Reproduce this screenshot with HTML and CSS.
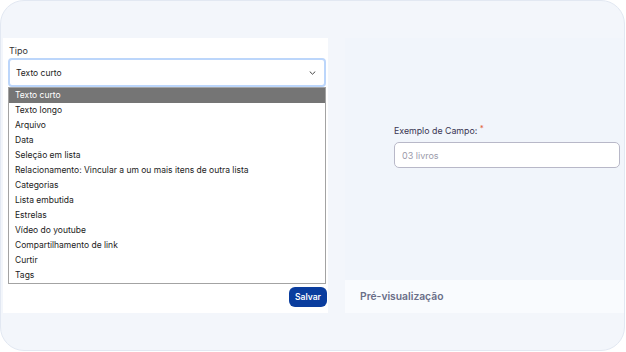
FILE: index.html
```html
<!DOCTYPE html>
<html lang="pt-BR">
<head>
    <meta charset="UTF-8">
    <meta name="viewport" content="width=device-width, initial-scale=1.0">
    <title>Campo - Tipo</title>
    <link rel="stylesheet" href="styles.css">
</head>
<body>
    <div class="card">
        <!-- Formulário -->
        <div class="form-panel">
            <label class="form-label">Tipo</label>
            <div class="select-wrap">
                <div class="select-box">
                    <span>Texto curto</span>
                    <svg class="chevron" width="7" height="4" viewBox="0 0 7 4">
                        <path d="M1 0.8l2.5 2.4 2.5-2.4" fill="none" stroke="#444" stroke-width="1" stroke-linecap="round" stroke-linejoin="round"/>
                    </svg>
                </div>
                <ul class="select-list">
                    <li class="selected">Texto curto</li>
                    <li>Texto longo</li>
                    <li>Arquivo</li>
                    <li>Data</li>
                    <li>Seleção em lista</li>
                    <li>Relacionamento: Vincular a um ou mais itens de outra lista</li>
                    <li>Categorias</li>
                    <li>Lista embutida</li>
                    <li>Estrelas</li>
                    <li>Vídeo do youtube</li>
                    <li>Compartilhamento de link</li>
                    <li>Curtir</li>
                    <li>Tags</li>
                </ul>
            </div>
            <div class="form-actions">
                <button class="btn-save">Salvar</button>
            </div>
        </div>

        <!-- Pré-visualização -->
        <div class="preview-panel">
            <div class="preview-body">
                <div class="field">
                    <label class="field-label">Exemplo de Campo: <span class="required">*</span></label>
                    <input class="field-input" type="text" placeholder="03 livros">
                </div>
            </div>
            <div class="preview-footer">Pré-visualização</div>
        </div>
    </div>
</body>
</html>
```

FILE: styles.css
```css
body {
    margin: 0;
    padding: 0;
    background-color: #ffffff;
    font-family: Inter, "Noto Sans", sans-serif;
}

.card {
    box-sizing: border-box;
    width: 625px;
    height: 351px;
    background-color: #f3f6fb;
    border: 1px solid #e2e8f2;
    border-radius: 24px;
    overflow: hidden;
    display: flex;
    align-items: flex-start;
    gap: 17px;
    padding: 37px 0 0 2px;
}

.form-panel {
    box-sizing: border-box;
    width: 326px;
    height: 275px;
    background-color: #ffffff;
    display: flex;
    flex-direction: column;
    padding: 6px 1px 6px 5px;
}

.form-label {
    font-size: 9px;
    line-height: 14px;
    color: #333333;
    margin-left: 1px;
}

.select-wrap {
    position: relative;
    width: 318px;
}

.select-box {
    box-sizing: border-box;
    height: 29px;
    border: 2px solid #bcd6fb;
    border-radius: 4px;
    display: flex;
    align-items: center;
    justify-content: space-between;
    padding: 0 8px 0 6px;
    font-size: 8.5px;
    color: #222222;
}

.chevron {
    display: block;
}

.select-list {
    position: absolute;
    top: 29px;
    left: 0;
    right: 0;
    margin: 0;
    padding: 0;
    list-style: none;
    background-color: #ffffff;
    border: 1px solid #a3a3a3;
    z-index: 2;
}

.select-list li {
    height: 15px;
    line-height: 15px;
    font-size: 8.5px;
    color: #222222;
    padding-left: 6px;
    white-space: nowrap;
}

.select-list li.selected {
    background-color: #757575;
    color: #ffffff;
}

.form-actions {
    margin-top: auto;
    display: flex;
    justify-content: flex-end;
}

.btn-save {
    border: none;
    border-radius: 6px;
    background-color: #0a3d9e;
    color: #ffffff;
    font-family: inherit;
    font-size: 8.5px;
    font-weight: 600;
    height: 20px;
    width: 38px;
    padding: 0;
    cursor: pointer;
}

.preview-panel {
    flex: 1;
    height: 275px;
    display: flex;
    flex-direction: column;
    background-color: #f1f5fb;
}

.preview-body {
    flex: 1;
    padding: 87px 4px 0 49px;
}

.field {
    display: flex;
    flex-direction: column;
    gap: 5px;
}

.field-label {
    font-size: 8.8px;
    line-height: 12px;
    color: #3a3552;
}

.required {
    color: #e2603c;
    font-size: 8px;
    vertical-align: top;
    position: relative;
    top: -3px;
}

.field-input {
    box-sizing: border-box;
    width: 226px;
    height: 26px;
    border: 1px solid #b8b8c8;
    border-radius: 5px;
    background-color: #ffffff;
    padding: 0 7px;
    font-family: inherit;
    font-size: 9px;
    outline: none;
}

.field-input::placeholder {
    color: #9a9aaa;
}

.preview-footer {
    height: 33px;
    line-height: 33px;
    background-color: #f9fbfe;
    padding-left: 15px;
    font-size: 10.3px;
    font-weight: 600;
    color: #6a6e88;
}
```
